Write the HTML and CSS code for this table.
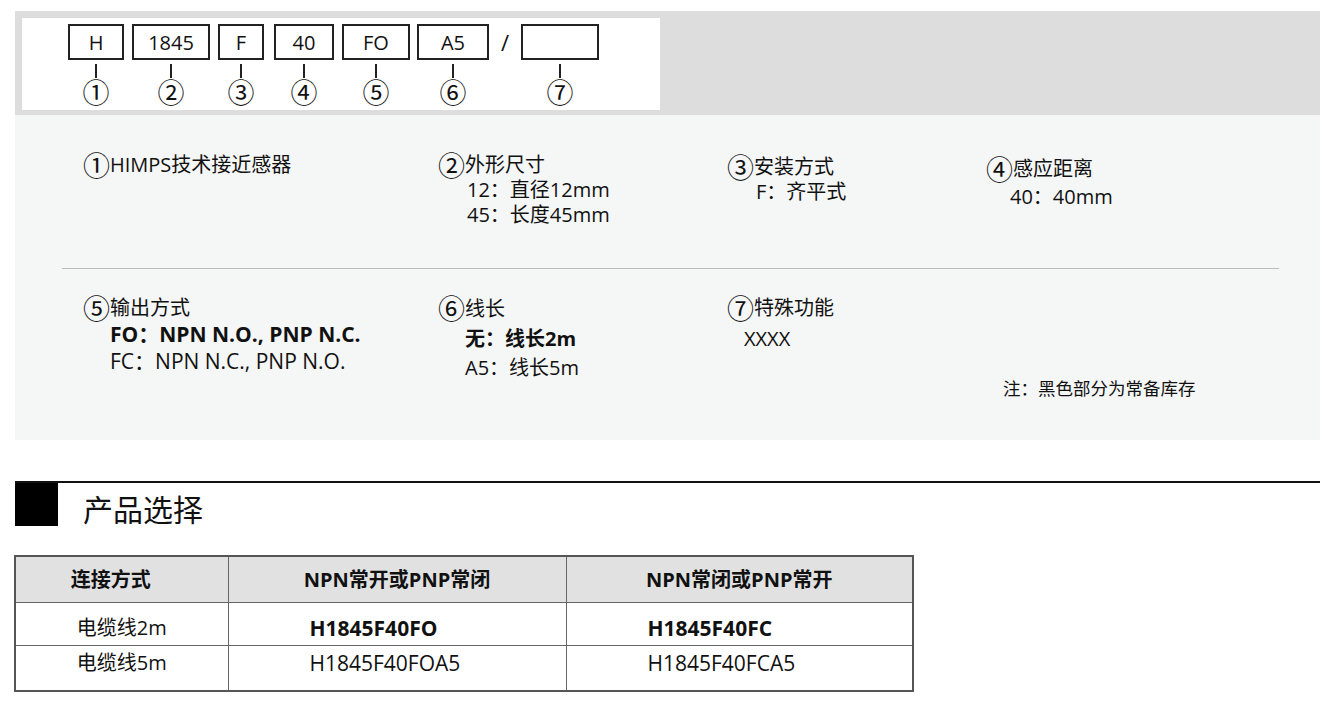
FILE: index.html
```html
<!DOCTYPE html>
<html lang="zh-CN">
<head>
    <meta charset="UTF-8">
    <meta name="viewport" content="width=device-width, initial-scale=1.0">
    <title>H1845 产品选择</title>
    <link rel="stylesheet" href="styles.css">
</head>
<body>
    <div class="page">
        <div class="code-band">
            <div class="code-card">
                <div class="code-item">
                    <div class="code-box c1">H</div>
                    <div class="tick"></div>
                    <div class="num">①</div>
                </div>
                <div class="code-item">
                    <div class="code-box c2">1845</div>
                    <div class="tick"></div>
                    <div class="num">②</div>
                </div>
                <div class="code-item">
                    <div class="code-box c3">F</div>
                    <div class="tick"></div>
                    <div class="num">③</div>
                </div>
                <div class="code-item gap-wide">
                    <div class="code-box c4">40</div>
                    <div class="tick"></div>
                    <div class="num">④</div>
                </div>
                <div class="code-item">
                    <div class="code-box c5">FO</div>
                    <div class="tick"></div>
                    <div class="num">⑤</div>
                </div>
                <div class="code-item gap-tight">
                    <div class="code-box c6">A5</div>
                    <div class="tick"></div>
                    <div class="num">⑥</div>
                </div>
                <div class="slash">/</div>
                <div class="code-item">
                    <div class="code-box c7"></div>
                    <div class="tick"></div>
                    <div class="num">⑦</div>
                </div>
            </div>
        </div>

        <div class="legend">
            <div class="legend-row first">
                <div class="item">
                    <div class="title"><span class="circ">①</span>HIMPS技术接近感器</div>
                </div>
                <div class="item">
                    <div class="title"><span class="circ">②</span>外形尺寸</div>
                    <div class="sub">12：直径12mm</div>
                    <div class="sub">45：长度45mm</div>
                </div>
                <div class="item shift-s">
                    <div class="title"><span class="circ">③</span>安装方式</div>
                    <div class="sub">F：齐平式</div>
                </div>
                <div class="item shift-m">
                    <div class="title"><span class="circ">④</span>感应距离</div>
                    <div class="sub">40：40mm</div>
                </div>
            </div>

            <div class="divider"></div>

            <div class="legend-row second">
                <div class="item">
                    <div class="title"><span class="circ">⑤</span>输出方式</div>
                    <div class="sub strong wide">FO：NPN N.O., PNP N.C.</div>
                    <div class="sub wide">FC：NPN N.C., PNP N.O.</div>
                </div>
                <div class="item loose">
                    <div class="title"><span class="circ">⑥</span>线长</div>
                    <div class="sub strong">无：线长2m</div>
                    <div class="sub">A5：线长5m</div>
                </div>
                <div class="item">
                    <div class="title"><span class="circ">⑦</span>特殊功能</div>
                    <div class="sub short">XXXX</div>
                </div>
                <div class="item">
                    <p class="note">注：黑色部分为常备库存</p>
                </div>
            </div>
        </div>

        <div class="section-head">
            <div class="section-mark"></div>
            <h2>产品选择</h2>
        </div>

        <table class="products">
            <thead>
                <tr>
                    <th class="col-conn">连接方式</th>
                    <th class="col-a">NPN常开或PNP常闭</th>
                    <th class="col-b">NPN常闭或PNP常开</th>
                </tr>
            </thead>
            <tbody>
                <tr class="row-2m">
                    <td class="conn">电缆线2m</td>
                    <td class="model stock">H1845F40FO</td>
                    <td class="model stock">H1845F40FC</td>
                </tr>
                <tr class="row-5m">
                    <td class="conn">电缆线5m</td>
                    <td class="model">H1845F40FOA5</td>
                    <td class="model">H1845F40FCA5</td>
                </tr>
            </tbody>
        </table>
    </div>
</body>
</html>
```

FILE: styles.css
```css
body {
    margin: 0;
    background-color: #fff;
    color: #111;
    font-family: "Open Sans", "Noto Sans CJK SC", sans-serif;
}
.page {
    padding: 11px 11px 0 15px;
}

/* model code band */
.code-band {
    background-color: #dcdddc;
    height: 104px;
    padding: 7px;
    box-sizing: border-box;
}
.code-card {
    background-color: #fff;
    width: 638px;
    height: 92px;
    padding: 6px 0 0 46px;
    box-sizing: border-box;
    display: flex;
    align-items: flex-start;
    gap: 8px;
}
.code-item {
    display: flex;
    flex-direction: column;
    align-items: center;
}
.code-item.gap-wide {
    margin-left: 2px;
}
.code-item.gap-tight {
    margin-left: -1px;
}
.code-box {
    height: 36px;
    border: 2px solid #222;
    box-sizing: border-box;
    display: flex;
    align-items: center;
    justify-content: center;
    font-size: 20px;
}
.c1 { width: 56px; }
.c2 { width: 78px; }
.c3 { width: 46px; }
.c4 { width: 60px; }
.c5 { width: 68px; }
.c6 { width: 72px; }
.c7 { width: 78px; }
.tick {
    width: 2px;
    height: 14px;
    margin-top: 4px;
    background-color: #222;
}
.num {
    font-family: "Noto Sans CJK SC", sans-serif;
    font-size: 27px;
    line-height: 26px;
    margin-top: 1px;
}
.slash {
    width: 16px;
    text-align: center;
    font-size: 22px;
    line-height: 36px;
}

/* legend */
.legend {
    background-color: #f5f6f6;
    height: 325px;
    padding-top: 37px;
    box-sizing: border-box;
}
.legend-row {
    display: grid;
    grid-template-columns: 355px 289px 259px 1fr;
    padding-left: 67px;
    font-size: 20px;
    line-height: 25px;
}
.legend-row.first {
    height: 75px;
}
.title {
    white-space: nowrap;
}
.circ {
    display: inline-block;
    font-family: "Noto Sans CJK SC", sans-serif;
    font-size: 27px;
    line-height: 25px;
    vertical-align: top;
    margin-left: 1px;
}
.sub {
    padding-left: 30px;
    white-space: nowrap;
}
.shift-s {
    padding-top: 2px;
}
.shift-m {
    padding-top: 4px;
}
.shift-m .sub {
    margin-top: 3px;
    padding-left: 25px;
}
.divider {
    margin: 41px 41px 0 47px;
    border-top: 1px solid #bcbcbc;
}
.legend-row.second {
    margin-top: 25px;
    line-height: 27px;
}
.legend-row.second .circ {
    line-height: 27px;
}
.legend-row.second .sub {
    padding-left: 28px;
}
.legend-row.second .sub.wide {
    font-size: 21px;
}
.loose {
    line-height: 29.5px;
}
.loose .sub {
    padding-left: 26px;
}
.sub.strong {
    font-weight: 700;
}
.legend-row.second .sub.short {
    padding-left: 18px;
    margin-top: 4px;
}
.note {
    margin: 82px 0 0 18px;
    font-size: 17.5px;
    line-height: 25px;
    white-space: nowrap;
}

/* section heading */
.section-head {
    margin-top: 41px;
    border-top: 2px solid #111;
    display: flex;
    align-items: flex-start;
}
.section-mark {
    width: 43px;
    height: 43px;
    background-color: #000;
}
.section-head h2 {
    margin: 0 0 0 25px;
    padding-top: 5px;
    font-size: 30px;
    line-height: 40px;
    font-weight: 400;
    font-family: "Noto Sans CJK SC", sans-serif;
}

/* product table */
.products {
    margin: 27px 0 0 -1px;
    width: 900px;
    border-collapse: collapse;
    border: 2px solid #555;
    font-size: 20px;
}
.products th,
.products td {
    border: 1px solid #666;
    padding: 0;
    line-height: 24px;
}
.products th {
    height: 45px;
    background-color: #e1e1e1;
    font-weight: 700;
    text-align: center;
}
.products th.col-conn {
    width: 213px;
    padding-right: 22px;
    box-sizing: border-box;
}
.col-a { width: 337px; }
.products td.conn {
    text-align: center;
}
.products td.model {
    padding-left: 81px;
    text-align: left;
    font-size: 21px;
}
.model.stock {
    font-weight: 700;
}
.row-2m td {
    height: 43px;
    vertical-align: top;
    padding-top: 13px;
    box-sizing: border-box;
}
.row-5m td {
    height: 45px;
    vertical-align: top;
    padding-top: 5px;
    box-sizing: border-box;
}
```
